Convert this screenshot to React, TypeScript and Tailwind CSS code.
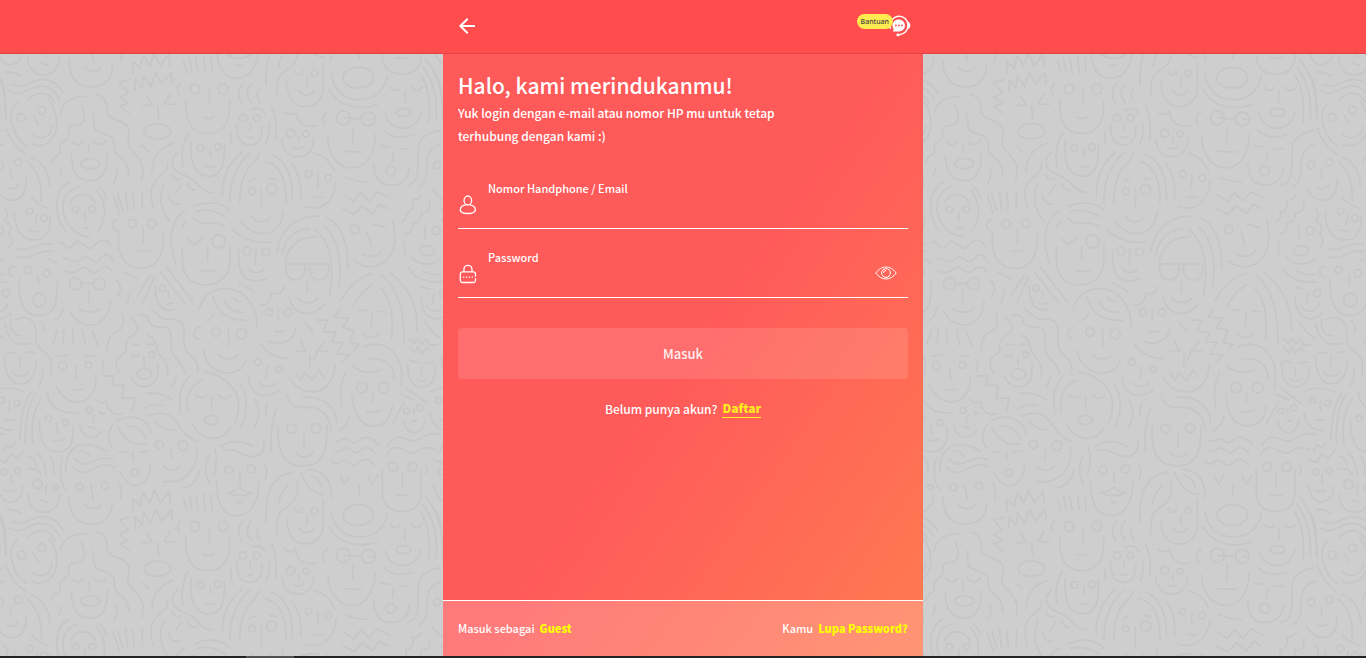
import { useState } from "react";
import type { FormEvent, ReactNode } from "react";

const TILE_W = 1311;
const TILE_H = 1312;

const upperLines = [
  "M37 103C70 120 90 90 125 88C160 88 180 110 190 130M29 123C65 145 85 108 125 108C155 110 170 130 178 146M85 151C100 130 125 125 145 135C158 145 162 155 164 159M18 67C35 64 50 70 61 78M0 80C15 110 18 160 17 207",
  "M52 158C28 180 30 210 40 235C50 265 65 280 80 288M147 151C165 175 172 205 170 230C168 270 130 300 95 282M100 198L115 223M94 252C110 268 135 268 150 250C155 243 156 235 155 228M17 231C30 270 50 295 76 312",
  "M180 190C190 150 225 138 259 139M289 134C320 138 322 165 321 185C325 215 375 205 386 235C392 255 382 270 384 285C390 305 425 320 429 355C430 370 428 380 425 391M244 166C255 190 255 210 245 220C230 232 210 220 207 238C205 250 208 262 200 268C185 280 180 280 181 295C182 315 175 315 165 320C157 328 155 335 154 341M277 191C285 205 278 225 285 238C300 255 335 250 342 275C345 285 340 295 345 305C355 325 385 325 386 374",
  "M216 274C225 288 242 288 250 272M280 272C288 287 310 287 319 271M266 284L268 309M214 314C215 350 222 392 271 392C315 392 322 350 322 308M185 356L178 381M349 351C353 370 350 385 341 399",
  "M389 89L358 98L386 128L359 142L386 160L358 169L388 190M405 124L405 88L426 114L431 76L452 109L467 68L485 101L514 68L516 100M440 138L456 164L427 168M510 132L493 162L527 163M473 167L476 207M541 100C530 112 531 125 538 135",
  "M628 120V165M611 200C617 208 635 208 641 200M557 147C556 200 563 250 625 250C683 250 690 200 689 153M728 101C712 120 712 140 725 160M753 101C738 120 738 140 754 159M777 119C768 130 770 145 780 156",
  "M755 180C770 172 785 175 795 192M751 222V241M741 261C748 264 755 264 760 261M710 222C710 260 718 285 750 285C780 285 786 260 786 230M692 245L694 280M808 221C810 245 805 265 798 281M814 168C830 200 832 235 827 270",
  "M630 298L632 321M616 350H645M574 274C570 310 572 379 627 379C675 379 674 320 673 280M565 251C545 285 543 320 549 351M522 279C480 290 455 325 456 366M424 287Q436 292 445 305M532 308C515 320 513 340 522 355C545 380 570 375 590 400C605 420 618 427 636 428",
  "M502 338C503 345 504 355 497 364C450 400 445 420 460 474M491 402C475 440 483 480 508 514M516 373C520 388 530 391 542 386M562 401C568 415 575 421 587 420M543 405L527 431M505 436C510 455 520 466 538 461",
  "M884 63C890 78 905 80 908 62M921 84V110M895 119C905 140 932 140 942 121M860 96C862 140 880 170 918 170C955 168 970 140 970 110V38M993 71C1000 120 1030 149 1078 149C1125 149 1155 120 1162 78M987 118C1010 165 1070 185 1132 164",
  "M1033 204L1083 207M1108 208H1118M983 185C966 195 965 210 973 225M1060 231L1058 276M1029 304L1086 306M983 262C985 310 1010 354 1055 354C1100 354 1125 310 1126 254M852 184C865 198 885 195 886 183C890 215 910 235 947 227M897 260L896 275M881 290C888 299 903 299 909 290M845 268C848 300 865 320 893 320C922 320 940 300 942 264",
  "M942 309C975 318 995 340 1004 363M954 374L953 414M942 440C950 443 963 443 970 440M1008 394C1005 445 970 490 912 469M1036 382C1055 390 1080 396 1103 396",
  "M1171 110C1177 125 1195 125 1200 110M1233 109C1240 125 1260 125 1267 109M1215 126V155M1156 191C1170 250 1250 250 1263 187M1151 240C1170 265 1210 265 1237 255M1263 75C1285 110 1292 160 1287 217M1270 53C1305 100 1312 150 1309 211M1275 25C1320 80 1330 140 1328 208",
  "M1320 241C1270 250 1252 275 1255 305C1253 350 1260 400 1222 405M1322 282C1285 290 1280 330 1281 355C1282 385 1270 405 1257 413M1142 287L1168 291M1201 296L1226 297M1181 306L1177 332M1122 340C1120 380 1140 406 1173 406C1205 406 1225 385 1228 354",
  "M30 361L34 385M21 411C30 420 48 418 53 404M-14 416C0 440 20 451 37 451C65 450 80 425 78 386M94 322C130 335 148 370 149 408M81 333C115 365 127 410 123 453M93 441C105 455 125 470 145 475",
  "M725 306C685 340 665 380 667 438M749 308C710 345 688 390 690 458M778 309C770 350 720 340 719 459M797 335C845 345 860 400 858 460M813 313C860 330 880 385 877 450M876 341C898 370 905 405 902 447M748 394C755 388 760 387 767 386M809 384L829 388M784 418V476M757 500C765 520 802 520 811 500M725 514C755 565 840 570 850 485M696 538C730 570 775 580 815 576",
  "M583 469C620 452 665 455 690 482M590 484C625 475 650 485 676 500M580 505C605 535 640 505 674 529M557 482C515 500 500 570 528 642M557 515Q548 525 547 536M561 566L584 584L608 562M623 590V633M601 660C615 665 635 665 648 660M547 590V630C548 680 575 705 617 705C665 705 690 670 690 630V584",
  "M768 597L766 643M747 657C755 671 780 671 790 657M716 601C713 660 725 710 798 687M716 698L762 724",
  "M831 603C845 530 895 495 957 499M845 614C855 560 885 540 928 535M856 635C865 580 905 562 950 560M944 538C1000 580 1000 670 989 738M974 529C1020 570 1025 650 1016 710M981 502C1030 530 1045 590 1043 658M857 642H986V660A28 30 0 0 1 929 660V642M914 642V660A28 30 0 0 1 857 660V642M914 660H929M922 692V725M893 742C900 763 945 763 953 742M867 744C885 805 945 800 974 761",
  "M1029 434L1060 454L1082 428L1107 453L1132 425L1170 444M1029 476L1062 493L1087 466L1118 491L1138 462L1162 476M1119 522L1156 532M1101 545L1114 588M1087 612C1105 625 1135 620 1144 601M1178 513C1190 570 1185 600 1165 625C1140 655 1095 660 1064 632",
  "M1264 436C1260 448 1250 450 1238 449C1242 470 1238 485 1218 486C1222 500 1215 515 1205 516M1287 455C1295 470 1288 490 1264 488C1265 510 1255 520 1238 518C1240 535 1235 550 1215 552M1275 529V565M1214 576C1212 590 1213 605 1216 619M1237 622C1255 648 1300 648 1322 627M1226 653C1245 690 1290 700 1330 695M1268 662C1285 674 1310 676 1322 673M12 474C25 485 25 500 14 513C35 520 38 540 24 553C38 562 42 580 26 592",
  "M112 493L106 523M83 540L116 546M43 490C45 540 65 570 103 570C140 570 150 540 151 500M53 595C90 610 105 575 157 582M53 620C95 635 110 595 158 604M145 627Q160 632 169 640M46 650C22 645 20 675 39 680M114 677L116 705M58 686C55 750 68 797 115 797C165 797 173 760 172 687M189 771C187 790 180 803 165 812",
  "M206 396C160 420 160 500 197 543M235 410C180 425 175 490 215 535C230 552 245 558 267 560M212 459C225 425 270 425 287 459M254 486L256 513M250 533H266M291 421C315 450 325 500 295 541M297 410Q312 420 319 444",
  "M340 436L358 491M353 430L368 482M376 425L383 480M398 428L403 480M427 423V474M353 509C332 508 332 545 357 543M430 534V581M412 603H449M356 550C350 610 370 655 425 655C480 655 492 600 490 546",
  "M178 576C195 575 195 595 206 595C218 595 220 575 234 574C250 573 255 595 270 595C285 592 290 570 308 571C325 571 330 580 332 590M190 626C205 620 213 636 225 636C240 636 242 621 255 621C272 621 275 637 288 637C300 635 302 614 320 614C333 616 336 625 339 635M190 661C205 670 213 667 222 667C236 665 240 651 252 652C265 653 270 668 285 668C298 666 303 651 317 651C330 652 335 662 337 669",
  "M244 700H280M266 720V755M237 775C250 790 285 790 299 775M210 783C225 825 285 840 313 805C325 790 330 775 330 752M350 692C365 705 365 725 353 738M391 721L382 762M371 667L412 686",
  "M452 673L412 738M464 679L429 758M482 667L555 761M499 650L580 756M505 723L507 744M496 762Q508 764 520 758M466 707C465 740 475 790 522 778",
  "M597 779C610 730 645 716 680 716C735 718 775 770 771 836M639 740C650 790 690 815 747 811M674 756C690 780 705 787 733 787M700 741Q707 755 724 756M644 790Q638 803 620 812M598 832C577 832 575 865 598 867M685 836L687 888",
  "M779 766C800 768 810 755 813 740C815 728 812 725 820 730C840 735 850 725 851 710M835 775V811M824 844Q840 846 855 844M887 832C885 870 850 890 807 873M912 815L939 845M780 880C800 910 830 925 866 926",
  "M1018 780L1003 801L1047 805L1027 833L1062 841L1047 878L1077 883L1062 900M953 811L983 810L970 845L1008 847L994 876L1030 877L1010 911L1050 915L1026 936M973 876L952 904L941 930M902 872L916 904",
  "M1023 752C1045 710 1080 680 1117 670M1060 769C1070 745 1090 720 1117 705M1142 713C1175 750 1180 810 1175 867M1145 673C1200 720 1215 800 1211 885M1171 668C1235 720 1255 780 1251 842M1076 780L1099 782M1134 783L1160 786M1116 785L1114 832M1090 851C1100 865 1128 865 1139 851M1091 890C1160 860 1220 920 1201 1012",
  "M1229 867L1244 880L1251 865L1265 882L1280 868L1290 886L1313 884M1229 890L1243 908L1252 892L1264 910L1280 892L1292 905M1302 730L1297 763M1264 710L1286 717M1281 765C1290 790 1325 790 1335 762M1264 742C1265 810 1310 820 1345 790M1274 815C1290 840 1310 858 1323 865",
  "M48 808C80 795 105 810 107 840C105 870 110 890 125 900M33 808C25 840 45 860 65 856M15 820C20 870 50 890 90 880M121 813Q133 825 132 846M172 841L159 881M192 839L189 885M218 839L220 885M247 842L257 886M277 844L294 887",
  "M366 793C380 830 360 840 340 850C325 865 320 880 322 900M394 803C420 825 420 845 395 857C378 868 375 880 378 900M415 795C440 790 445 805 448 815C455 835 480 830 500 832C520 845 510 870 515 900C520 930 545 930 556 970M452 777C470 785 475 805 500 808C530 805 550 810 553 840C548 870 552 900 565 910C590 930 598 950 592 967M443 856Q468 865 469 895C475 920 510 935 502 975M397 883H418M440 883H460",
];

const lowerLines = [
  "M21 8H47M78 7H103M59 22V50M37 65C50 83 75 83 86 65M13 18C15 70 30 102 62 102C95 102 108 65 109 31M125 0C150 15 160 30 153 76M129 58Q130 85 118 107M174 18L206 15M256 16L285 20M228 50L230 90M214 119Q232 122 249 117M167 107C190 155 225 156 230 156C270 156 288 125 288 85M305 29Q316 42 306 63M142 127C145 170 185 195 235 187",
  "M309 77L342 79L335 105L372 106L366 145L406 144L397 185M287 147C295 160 310 160 318 154C325 185 345 200 368 190M299 183C300 195 308 192 315 188M283 195L278 217M265 230L288 235M239 223C245 270 290 270 306 242",
  "M170 219L173 252M157 269Q175 276 196 267M118 211C118 270 135 306 173 306C210 304 222 280 219 232M92 127C65 170 60 220 60 271M106 131C80 170 75 220 76 281M124 146C95 190 93 240 99 282M-20 125C10 110 45 112 72 127M28 151V184M12 212L42 208M-20 190C-18 225 10 245 37 240",
  "M8 303L18 284L33 292L46 276M-12 329L17 338L32 313L52 325L72 299M34 372V399M13 421Q28 425 42 421M-11 405C0 440 15 457 28 457C55 455 68 435 68 408M82 318Q105 322 109 348M82 356C100 352 120 360 124 376M112 309C125 320 137 345 138 373M148 318C160 330 163 350 161 372M140 403L137 431M123 450Q133 457 145 457M84 433C85 470 105 487 132 487C160 486 178 465 179 434",
  "M188 324C175 360 180 400 197 418M197 366C195 300 230 280 265 284C290 286 305 295 319 304M224 325C265 370 280 310 340 328M217 351C270 400 285 320 343 352M239 303Q258 303 272 320M272 406L280 446M253 463C265 480 295 480 303 463M206 440C208 495 230 523 275 523C320 523 338 490 337 458M357 396Q368 420 362 446",
  "M339 224C320 250 325 275 338 293M351 214C390 190 445 200 456 253M384 228Q425 228 438 267M354 232C375 275 405 288 440 282M356 306Q370 310 380 304M416 304Q432 308 445 302M398 308L401 333M360 367C380 405 395 407 405 407C440 405 452 370 452 339",
  "M439 130Q485 125 517 149M430 177Q455 160 488 167M445 198C480 180 515 190 535 225C555 255 575 270 592 272M465 213Q485 240 522 240M514 292V326M490 347C500 365 530 365 540 347M590 294C595 350 560 405 488 394M599 360C595 385 575 410 550 414",
  "M391 12Q405 28 418 12M431 18L433 45M392 79C405 120 470 125 474 66V41M378 0C375 15 340 20 350 50Q352 62 360 69M530 80L517 109M610 0C615 45 650 69 685 69C715 68 732 50 739 29M656 14C665 31 705 31 714 14",
  "M614 65C690 80 715 130 716 165C715 190 710 205 704 217M606 90C560 115 558 145 562 182M567 79C535 115 537 150 542 191M587 134C595 146 613 146 620 134M655 134C665 149 685 149 692 134M635 141V178M577 222C600 270 665 285 691 229M721 103C750 150 740 195 722 234M764 148C782 180 778 210 761 235M803 163Q793 180 800 196M802 49L798 83M778 98C785 113 815 113 826 98M745 79C748 140 795 150 838 120",
  "M663 289C690 270 730 270 760 290M670 302C710 290 720 320 755 320C785 320 795 300 791 269M719 367L721 400M681 428Q705 425 719 411Q733 425 754 428Q719 446 681 428ZM710 456Q719 460 728 456M650 396C650 460 670 497 711 497C755 497 778 450 776 387M628 315C612 345 615 380 629 401M643 291C653 325 650 350 641 374M794 342Q804 365 795 388",
  "M399 484V447L420 467L430 428L449 459L463 421L481 459L507 424L510 459M550 445L561 480M569 439L576 480M587 436L595 480M612 434L615 480M633 434L636 480",
  "M880 367C815 375 795 430 798 517M891 395C900 450 870 465 850 478C830 495 830 520 831 552M864 406C845 425 838 440 836 462M902 367C915 405 940 430 970 434M932 377C950 383 960 395 964 411M928 358C975 362 995 390 993 444",
  "M861 134C870 175 890 172 940 173C975 180 990 205 994 244M907 142C960 137 1010 165 1009 217M832 172C812 210 812 260 814 303M912 254V290M888 306C895 325 930 325 939 306M834 227C832 290 840 348 910 348C975 348 982 290 981 227M1050 199Q1042 230 1016 243",
  "M887 3H916M948 3H986M930 15V48M888 70L903 91L914 67L937 91L957 60L972 83M868 83C895 125 920 126 935 126C975 126 1005 90 1005 45M1056 47C1080 70 1115 70 1141 60M1105 27Q1180 20 1183 87M1118 130V157M1100 184Q1120 190 1142 181M1056 134C1060 190 1080 228 1120 228C1160 228 1172 200 1177 167M1037 68C1018 105 1018 140 1026 175",
  "M1006 272C1020 280 1025 266 1035 266C1050 266 1050 278 1062 278C1078 278 1080 262 1095 262C1115 262 1125 272 1137 285M1002 300C1018 315 1030 292 1040 292C1052 294 1055 308 1068 308C1082 306 1085 293 1098 293C1112 294 1120 304 1125 312M995 331C1003 355 1020 335 1030 330C1045 328 1050 346 1062 346C1078 346 1080 328 1095 328C1112 330 1118 338 1123 347M1163 288C1180 255 1205 260 1220 268C1260 290 1265 240 1322 253M1161 318C1170 285 1195 290 1212 300C1260 330 1250 275 1306 299",
  "M1022 378L1033 403L1049 377M1104 378L1117 403L1133 377M1077 400V437M1207 371V411M1188 436H1225M1147 359V430C1148 465 1170 484 1205 484C1245 484 1262 465 1263 430V359M1275 344Q1288 355 1277 370",
  "M1228 31L1252 38M1276 40L1301 35M1264 52V77M1248 86Q1265 100 1282 86M1223 38C1222 90 1240 111 1264 111C1295 111 1306 85 1306 50M1204 132L1243 150M1221 115L1280 159M1213 155L1178 220M1240 174L1242 193M1237 215L1252 212M1212 211C1212 260 1275 260 1274 209",
];

// Each entry is [cx, cy, rx, ry].
const upperRounds: number[][] = [
  [64, 203, 12, 12], [125, 181, 12, 12], [271, 341, 29, 15], [472, 244, 40, 23], [585, 117, 15, 15], [669, 117, 15, 15],
  [729, 204, 11, 11], [770, 204, 10, 10], [602, 293, 10, 10], [653, 291, 10, 10], [944, 70, 10, 10], [1075, 83, 46, 31],
  [1030, 204, 21, 21], [1105, 207, 21, 21], [872, 250, 12, 12], [918, 252, 9, 9], [926, 372, 10, 10], [985, 384, 10, 10],
  [1211, 187, 22, 12], [1172, 363, 15, 15], [0, 345, 11, 11], [55, 337, 11, 11], [755, 424, 10, 10], [815, 417, 15, 15],
  [656, 574, 20, 20], [741, 603, 12, 12], [797, 606, 12, 12], [1064, 538, 13, 13], [1309, 542, 12, 12], [1281, 602, 23, 14],
  [89, 484, 10, 10], [132, 504, 10, 10], [83, 660, 11, 11], [140, 670, 11, 11], [118, 750, 20, 20], [226, 478, 10, 10],
  [277, 478, 10, 10], [397, 521, 13, 13], [455, 520, 13, 13], [226, 702, 18, 18], [298, 702, 18, 18], [487, 715, 9, 9],
  [648, 846, 13, 13], [724, 852, 15, 15], [807, 787, 11, 11], [864, 787, 11, 11], [18, 729, 11, 11],
];

const lowerRounds: number[][] = [
  [188, 47, 12, 12], [265, 45, 10, 10], [267, 181, 9, 9], [145, 205, 9, 9], [197, 218, 9, 9], [5, 151, 9, 9],
  [50, 160, 9, 9], [13, 366, 9, 9], [53, 363, 9, 9], [113, 403, 14, 14], [168, 412, 8, 8], [238, 411, 11, 11],
  [315, 407, 11, 11], [404, 368, 11, 11], [478, 284, 12, 12], [549, 286, 15, 15], [455, 13, 9, 9], [433, 72, 22, 15],
  [634, 210, 21, 14], [773, 36, 10, 10], [838, 58, 9, 9], [687, 360, 12, 12], [754, 357, 12, 12], [875, 236, 14, 14],
  [948, 235, 14, 14], [1086, 112, 16, 16], [1151, 113, 16, 16], [1179, 351, 14, 14], [1238, 351, 14, 14],
  [1220, 183, 9, 9], [1259, 173, 9, 9],
];

function Strokes({ lines, rounds }: { lines: string[]; rounds: number[][] }) {
  return (
    <>
      {lines.map((d) => (
        <path key={d} d={d} />
      ))}
      {rounds.map(([cx, cy, rx, ry]) => (
        <ellipse key={`${cx}-${cy}`} cx={cx} cy={cy} rx={rx} ry={ry} />
      ))}
    </>
  );
}

function FacesBackdrop() {
  const columns = [-1, 0, 1, 2, 3, 4, 5];
  const rows = [-1, 0, 1, 2];
  return (
    <svg aria-hidden="true" className="absolute inset-0 h-full w-full" fill="none">
      <defs>
        <g id="faces" stroke="#c6c6c6" strokeWidth="5" strokeLinecap="round" strokeLinejoin="round">
          <Strokes lines={upperLines} rounds={upperRounds} />
          <g transform="translate(0 900)">
            <Strokes lines={lowerLines} rounds={lowerRounds} />
          </g>
        </g>
      </defs>
      <g transform="scale(0.33333) translate(0 -12)">
        {rows.map((r) =>
          columns.map((c) => <use key={`${r}-${c}`} href="#faces" x={c * TILE_W} y={r * TILE_H} />),
        )}
      </g>
    </svg>
  );
}

function BackIcon() {
  return (
    <svg aria-hidden="true" className="h-4 w-4" viewBox="0 0 16 16" fill="#fff">
      <path d="M16 7H3.83l5.59-5.59L8 0 0 8l8 8 1.41-1.41L3.83 9H16z" />
    </svg>
  );
}

function HelpIcon() {
  return (
    <svg aria-hidden="true" className="h-[22px] w-[22px]" viewBox="0 0 22 22" fill="none">
      <path d="M2.6 5.6C4.5 2.6 7 1.2 10.2 1.2c4.8 0 8.8 4 8.8 9.2 0 5-3.6 8.9-8.6 9.4" stroke="#fff" strokeWidth="1.5" />
      <path d="M18.4 6.6c1.8.4 2.9 1.9 2.9 3.8s-1.1 3.4-2.9 3.8z" fill="#fff" />
      <path d="M1.900 9.500v4.700C.7 13.900 0 13.200 0 12s.8-2.300 1.900-2.500z" fill="#fff" />
      <ellipse cx="9" cy="19.900" rx="1.700" ry="1.300" fill="#fff" />
      <path d="M9.900 4.400a6.100 6.100 0 1 1 0 12.200H3.700l1.100-2.300a6.100 6.100 0 0 1 5.100-9.900z" fill="#fff" />
      <circle cx="6.900" cy="10.500" r="0.900" fill="#ff4d4d" />
      <circle cx="9.900" cy="10.500" r="0.900" fill="#ff4d4d" />
      <circle cx="12.900" cy="10.500" r="0.900" fill="#ff4d4d" />
    </svg>
  );
}

function UserIcon() {
  return (
    <svg aria-hidden="true" className="h-5 w-5" viewBox="-1 0 20 20" fill="none" stroke="#fff" strokeWidth="1.3">
      <ellipse cx="8.800" cy="5.500" rx="3.800" ry="4.500" />
      <path d="M6.500 9.900C3.400 10.500 1.300 12.300 1.300 14.700c0 2.600 3.200 3.800 7.500 3.800s7.500-1.200 7.500-3.800c0-2.400-2.100-4.200-5.200-4.800" />
    </svg>
  );
}

function LockIcon() {
  return (
    <svg aria-hidden="true" className="h-5 w-5" viewBox="-1 0 20 20" fill="none" stroke="#fff" strokeWidth="1.3">
      <path d="M4.900 7.800V5.400a4 4 0 0 1 8.100 0v2.400" />
      <path d="M16.500 12.200V10a2.200 2.200 0 0 0-2.200-2.200H3.500A2.200 2.200 0 0 0 1.300 10v6.300a2.200 2.200 0 0 0 2.200 2.200h10.800a2.200 2.200 0 0 0 2.200-2.200v-1.600" strokeLinecap="round" />
      <path d="M4 13.200h1.300M6.900 13.200h1.300M9.800 13.200h1.300M12.700 13.200H14" />
    </svg>
  );
}

function EyeIcon() {
  return (
    <svg aria-hidden="true" className="h-[14px] w-[22px]" viewBox="0 0 22 14" fill="none" stroke="#fff" strokeWidth="1">
      <path d="M.8 7C3.500 3.200 7 1 11 1s7.500 2.200 10.200 6c-2.700 3.800-6.200 6-10.200 6S3.500 10.800.8 7z" strokeLinejoin="round" />
      <circle cx="11" cy="7" r="4.400" />
      <path d="M8.500 7A2.500 2.500 0 0 1 11 4.500" />
    </svg>
  );
}

type FieldProps = {
  id: string;
  label: string;
  type: string;
  value: string;
  onChange: (value: string) => void;
  icon: ReactNode;
  action?: ReactNode;
};

function Field({ id, label, type, value, onChange, icon, action }: FieldProps) {
  return (
    <div className="flex h-[69px] items-end border-b border-white">
      <span className="w-[30px] pb-[13px]">{icon}</span>
      <div className="flex min-w-0 flex-1 flex-col">
        <label htmlFor={id} className="text-[11px] leading-4">
          {label}
        </label>
        <input
          id={id}
          type={type}
          value={value}
          onChange={(e) => onChange(e.target.value)}
          className="h-8 w-full bg-transparent text-[13px] outline-none"
        />
      </div>
      {action}
    </div>
  );
}

export default function App() {
  const [user, setUser] = useState("");
  const [password, setPassword] = useState("");
  const [visible, setVisible] = useState(false);

  return (
    <div className="flex min-h-screen flex-col bg-[#cecece] font-['Noto_Sans_CJK_JP','Noto_Sans',sans-serif] font-medium text-white">
      <header className="border-b border-[#e24444] bg-[#ff4d4d]">
        <div className="mx-auto flex h-[53px] w-full max-w-[480px] items-center justify-between pr-3 pb-[2px] pl-4">
          <a href="#kembali" aria-label="Kembali">
            <BackIcon />
          </a>
          <a href="#bantuan" className="flex items-center">
            <span className="relative z-10 -mr-1 mb-2 h-[15px] rounded-full bg-[#ffeb50] px-1 font-['Noto_Sans',sans-serif] text-[7px] leading-[15px] font-medium text-[#444]">
              Bantuan
            </span>
            <HelpIcon />
          </a>
        </div>
      </header>

      <div className="relative flex flex-1 flex-col overflow-hidden">
        <FacesBackdrop />
        <main className="relative mx-auto flex w-full max-w-[480px] flex-1 flex-col bg-[linear-gradient(125deg,#ff5a5a_50%,#ff7b51_100%)]">
          <div className="px-[15px] pt-4">
            <h1 className="text-[21px] leading-[31px]">Halo, kami merindukanmu!</h1>
            <p className="max-w-[340px] text-xs leading-[23px]">
              Yuk login dengan e-mail atau nomor HP mu untuk tetap terhubung dengan kami :)
            </p>
            <form className="mt-[13px]" onSubmit={(e: FormEvent) => e.preventDefault()}>
              <Field
                id="user"
                label="Nomor Handphone / Email"
                type="text"
                value={user}
                onChange={setUser}
                icon={<UserIcon />}
              />
              <Field
                id="password"
                label="Password"
                type={visible ? "text" : "password"}
                value={password}
                onChange={setPassword}
                icon={<LockIcon />}
                action={
                  <button
                    type="button"
                    aria-label="Tampilkan password"
                    onClick={() => setVisible(!visible)}
                    className="pr-[11px] pb-[17px]"
                  >
                    <EyeIcon />
                  </button>
                }
              />
              <button type="submit" className="mt-[30px] h-[51px] w-full rounded bg-white/12 text-[13px] text-white/90">
                Masuk
              </button>
            </form>
            <p className="mt-[18px] flex justify-center gap-[5px] text-xs leading-[23px]">
              Belum punya akun?
              <a href="#daftar" className="my-[2px] border-b border-[#ffeb1f] leading-[18px] font-black text-[#ffeb1f]">
                Daftar
              </a>
            </p>
          </div>
          <footer className="mt-auto flex h-14 items-center justify-between border-t border-white bg-white/20 px-[15px] text-[11px]">
            <p className="flex gap-[5px]">
              Masuk sebagai
              <a href="#guest" className="font-black text-[#ffff00]">
                Guest
              </a>
            </p>
            <p className="flex gap-[5px]">
              Kamu
              <a href="#lupa-password" className="font-black text-[#ffff00]">
                Lupa Password?
              </a>
            </p>
          </footer>
        </main>
      </div>
      <div className="flex h-[2px] bg-[#242424]">
        <div className="ml-[18%] w-12 bg-[#505050]" />
      </div>
    </div>
  );
}
